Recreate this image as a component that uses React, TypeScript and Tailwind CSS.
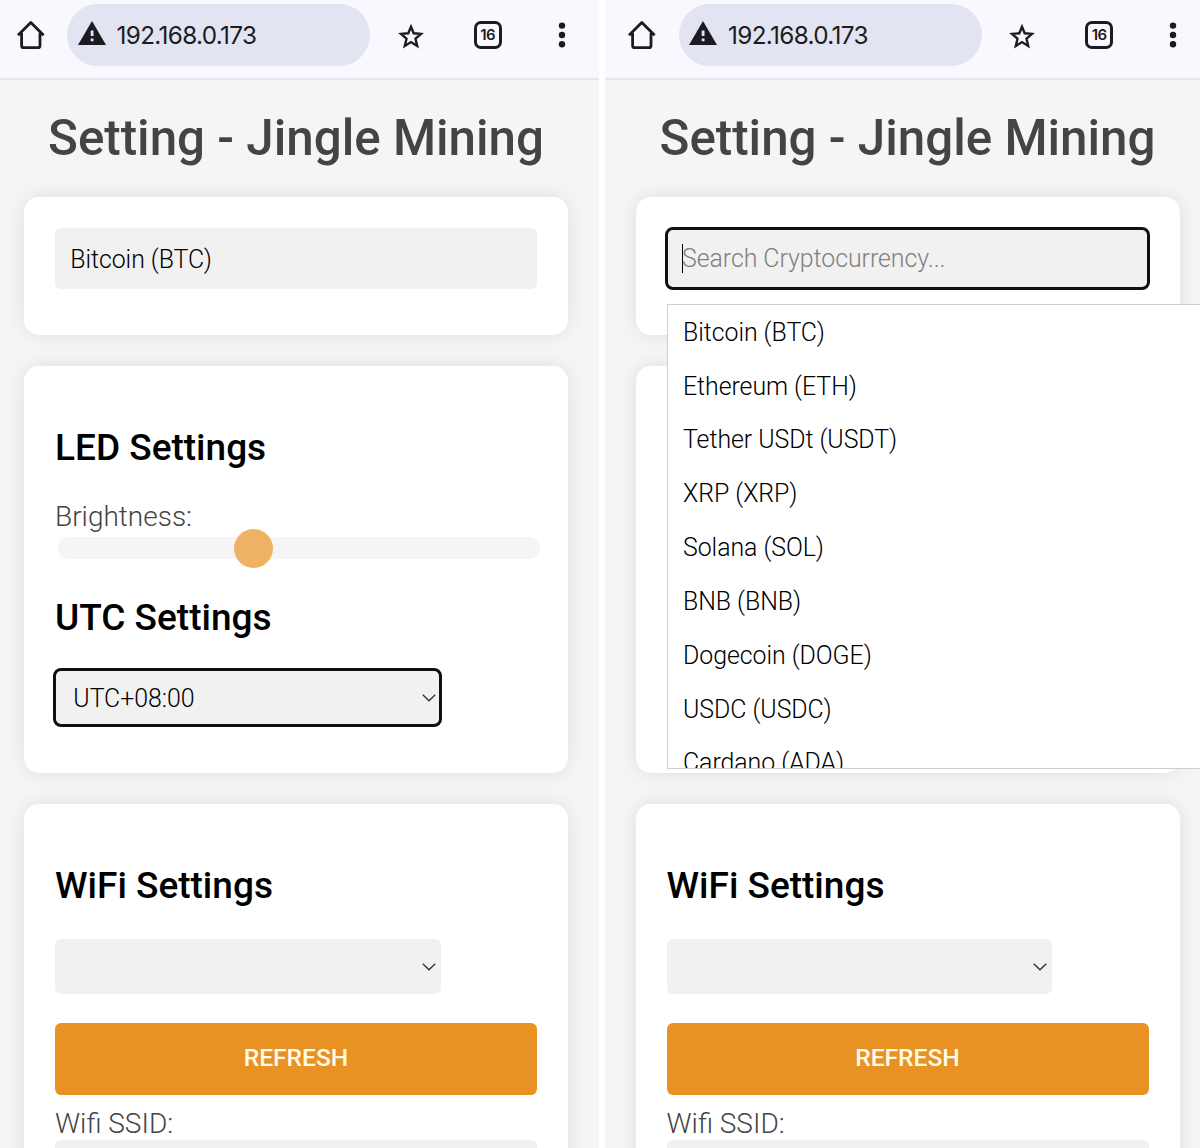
import React from "react";

const coins = [
  "Bitcoin (BTC)",
  "Ethereum (ETH)",
  "Tether USDt (USDT)",
  "XRP (XRP)",
  "Solana (SOL)",
  "BNB (BNB)",
  "Dogecoin (DOGE)",
  "USDC (USDC)",
  "Cardano (ADA)",
];

const Chevron: React.FC = () => (
  <svg width="14" height="8" viewBox="0 0 14 8" fill="none">
    <path d="M0.8 0.8 7 6.8 13.2 0.8" stroke="#2a2a2a" strokeWidth="1.2" />
  </svg>
);

const BrowserBar: React.FC = () => (
  <header className="h-20 border-b-2 border-[#e5e4ea] bg-[#f9f8fe]">
    <div className="flex h-[70px] items-center pl-[23px] text-[#1c1b21]">
      <svg className="shrink-0" width="28" height="30" viewBox="0 0 28 30" fill="none">
        <path
          d="M1 15.2 13.8 2.4 26.6 15.2M4.6 13V25.4Q4.6 27.6 6.8 27.6H20.8Q23 27.6 23 25.4V13"
          stroke="currentColor"
          strokeWidth="2.8"
          strokeLinejoin="round"
        />
      </svg>
      <div className="ml-[22.5px] flex h-[62px] w-[303px] shrink-0 items-center rounded-full bg-[#e2e4f1] pl-[10.5px]">
        <svg className="-mt-1 shrink-0" width="28" height="24" viewBox="0 0 28 24">
          <path d="M14 0 28 24H0Z" fill="currentColor" />
          <path d="M12.7 9.5h2.8v5.5h-2.8zM12.7 17.5h2.8v2.8h-2.8z" fill="#e2e4f1" />
        </svg>
        <span className="ml-[11px] font-['Inter'] text-[24.3px] font-normal tracking-[-0.65px]">
          192.168.0.173
        </span>
      </div>
      <svg className="mt-[3px] ml-[27.7px] shrink-0" width="26" height="25" viewBox="0 0 26 25" fill="none">
        <path
          d="M13 2.8 15.7 9.3 23 9.9 17.5 14.7 19.2 22 13 18.1 6.8 22 8.5 14.7 3 9.9 10.3 9.3Z"
          stroke="currentColor"
          strokeWidth="2.4"
        />
      </svg>
      <div className="ml-[50px] flex h-7 w-7 shrink-0 items-center justify-center rounded-[7px] border-3 border-current font-['Inter'] text-[15px] font-semibold tracking-[-0.5px]">
        16
      </div>
      <svg className="ml-[53px] shrink-0" width="14" height="28" viewBox="0 0 14 28" fill="currentColor">
        <circle cx="7" cy="4.6" r="3.2" />
        <circle cx="7" cy="14" r="3.2" />
        <circle cx="7" cy="23.3" r="3.2" />
      </svg>
    </div>
  </header>
);

const Card: React.FC<{ className: string; children?: React.ReactNode }> = ({
  className,
  children,
}) => (
  <section
    className={`rounded-[15px] bg-white px-[31px] shadow-[0_0_20px_rgba(0,0,0,0.09)] ${className}`}
  >
    {children}
  </section>
);

const Heading: React.FC<{ children: React.ReactNode }> = ({ children }) => (
  <h2 className="text-[37px] leading-[44px] font-medium text-black">{children}</h2>
);

const CoinPicker: React.FC<{ open: boolean }> = ({ open }) => {
  if (!open) {
    return (
      <div className="mt-[31px] flex h-[60.5px] w-[482px] items-center rounded-md bg-[#f1f1f1] pt-[1.5px] pl-[15.2px] text-[24.9px] tracking-[-0.05px]">
        Bitcoin (BTC)
      </div>
    );
  }
  return (
    <div className="relative mt-[29.5px]">
      <div className="-ml-[1.5px] flex h-[63px] w-[485px] items-center rounded-lg border-3 border-[#101010] bg-[#f1f1f1] pl-[14px] text-[24.9px] tracking-[-0.05px] text-[#808080]">
        <span className="h-[29px] w-px bg-black" />
        <span className="-ml-px pt-px">Search Cryptocurrency...</span>
      </div>
      <ul className="absolute top-[77px] left-0 z-10 h-[465px] w-[600px] overflow-hidden border border-[#cfcfcf] bg-white text-[24.9px] tracking-[-0.05px]">
        {coins.map((coin) => (
          <li key={coin} className="flex h-[53.85px] items-center pt-[1.3px] pl-[15.5px]">
            {coin}
          </li>
        ))}
      </ul>
    </div>
  );
};

const LedAndUtc: React.FC = () => (
  <>
    <Heading>LED Settings</Heading>
    <p className="mt-[30px] text-[28px] leading-[33px] text-[#444]">Brightness:</p>
    <div className="mt-[4.2px] ml-[3px] flex h-[22.5px] w-[482px] items-center rounded-full bg-[#f5f5f5]">
      <div className="ml-[176px] h-[39px] w-[39px] shrink-0 rounded-full bg-[#efb265]" />
    </div>
    <div className="mt-[36.3px]">
      <Heading>UTC Settings</Heading>
    </div>
    <div className="mt-[28.8px] -ml-[1.7px] flex h-[59px] w-[388.5px] items-center justify-between rounded-lg border-3 border-[#101010] bg-[#f1f1f1] pr-[3px] pl-[17px] text-[24.9px] tracking-[-0.05px]">
      <span className="pt-px">UTC+08:00</span>
      <Chevron />
    </div>
  </>
);

const Phone: React.FC<{ open?: boolean }> = ({ open = false }) => (
  <div className="h-full w-[605.5px] shrink-0 bg-[#f5f5f5]">
    <BrowserBar />
    <main className="pr-[31px] pl-[30.5px]">
      <h1 className="pt-[28.8px] text-center text-[49.3px] leading-[58px] font-medium whitespace-nowrap text-[#444]">
        Setting - Jingle Mining
      </h1>
      <Card className="mt-[30.5px] flow-root h-[137.4px]">
        <CoinPicker open={open} />
      </Card>
      {/* the open list lies over this whole card */}
      <Card className="mt-[31px] h-[407px] pt-[60px]">{!open && <LedAndUtc />}</Card>
      <Card className="mt-[31px] h-[500px] pt-[60.5px]">
        <Heading>WiFi Settings</Heading>
        <div className="mt-[31px] flex h-[55px] w-[385.5px] items-center justify-end rounded-md bg-[#f1f1f1] pr-[5px]">
          <Chevron />
        </div>
        <button className="mt-[28.5px] block h-[72.5px] w-[482px] rounded-md bg-[#e99224] text-center text-[24.6px] font-medium text-[#fffbe8]">
          REFRESH
        </button>
        <p className="mt-3 text-[28px] leading-[33px] text-[#444]">Wifi SSID:</p>
        <div className="h-[60px] w-[482px] rounded-md bg-[#f1f1f1]" />
      </Card>
    </main>
  </div>
);

const App: React.FC = () => (
  <div className="flex h-[1148px] w-[1200px] gap-1.5 overflow-hidden bg-white font-['Roboto',sans-serif] font-light text-black">
    <div className="flex w-[599px] shrink-0 justify-end overflow-hidden">
      <Phone />
    </div>
    <div className="flex w-[595px] shrink-0 overflow-hidden">
      <Phone open />
    </div>
  </div>
);

export default App;
